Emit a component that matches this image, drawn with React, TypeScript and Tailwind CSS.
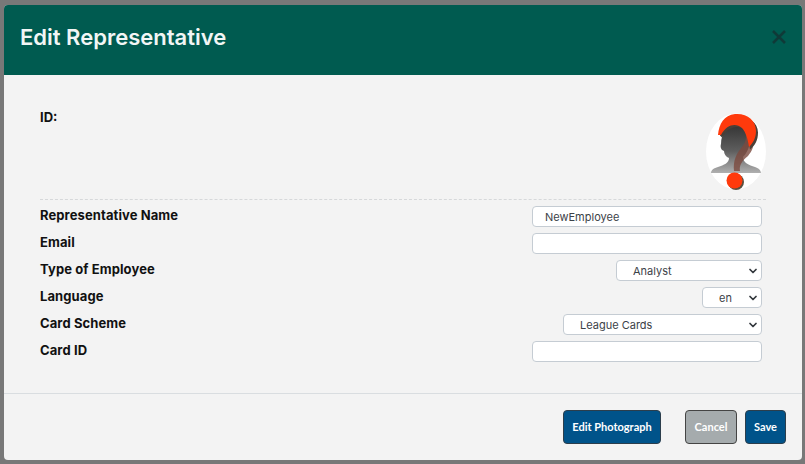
import { ChevronDown } from "lucide-react";

const inputClass =
  "h-[21px] w-[230px] rounded-[4px] border border-[#c5ccd3] bg-white pl-[12px] text-[11px] text-[#3c4248] outline-none";

function Avatar() {
  return (
    <svg width="62" height="78" viewBox="0 0 62 78" className="block">
      <defs>
        <linearGradient id="bust" x1="0" y1="0" x2="0" y2="1">
          <stop offset="0" stopColor="#333" />
          <stop offset="0.55" stopColor="#5e5e5e" />
          <stop offset="1" stopColor="#b0b0b0" />
        </linearGradient>
      </defs>
      <ellipse cx="31" cy="38.5" rx="30" ry="38" fill="#fff" />
      <path
        d="M16 31C16 20 23 11 32 11C42 11 46 20 45 29C44 36 41 41 38 44C38 50 44 52 50 54C53 55 56 57 56 60H6C6 57 9 55 13 54C19 52 24 50 24 45C21 44 19 41 19 38C16 37 15 34 16 31Z"
        fill="url(#bust)"
      />
      <path
        d="M29 58C28 48 31 41 37 34C41 29 42 24 40 18L47 26C50 33 47 38 43 43C37 48 34 52 35 58Z"
        fill="#7c4a3e"
        opacity="0.8"
      />
      <path
        d="M14 21C14 12 20 3 30 2C41 1 52 7 52 18C52 26 49 31 44 35C43 28 42 20 38 15C32 10 22 12 16 23Z"
        fill="#4a4038"
        transform="translate(1 1.5)"
      />
      <path
        d="M13 22C14 11 19 2 30 1C42 0 51 7 51 18C51 25 48 30 44 34C43 27 41 19 37 15C31 10 22 11 16 22Z"
        fill="#ff3a0c"
      />
      <circle cx="31" cy="69" r="8" fill="#5a5040" />
      <circle cx="29.5" cy="67.5" r="8" fill="#ff3a0c" />
    </svg>
  );
}

function Field({ label, children }: { label: string; children: React.ReactNode }) {
  return (
    <div className="flex h-[21px] items-start justify-between">
      <label className="text-[13px] leading-[18px] font-bold tracking-[0.1px] text-[#111]">{label}</label>
      {children}
    </div>
  );
}

function Select({ width, value }: { width: string; value: string }) {
  return (
    <div className={`relative ${width}`}>
      <select
        defaultValue={value}
        className="block h-[21px] w-full appearance-none rounded-[4px] border border-[#c5ccd3] bg-white pt-[2px] pl-[16px] text-[11px] text-[#3c4248] outline-none"
      >
        <option>{value}</option>
      </select>
      <ChevronDown
        size={12}
        strokeWidth={3.5}
        className="pointer-events-none absolute top-[5px] right-[3px] text-[#33383d]"
      />
    </div>
  );
}

export default function App() {
  return (
    <div className="h-[464px] w-[805px] overflow-hidden bg-[#787878] pt-[5px] pl-[4px] font-['Inter',sans-serif]">
      <div className="flex h-[455px] w-[798px] flex-col overflow-hidden rounded-[4px] bg-[#f3f3f3]">
        <div className="flex h-[70px] shrink-0 items-center justify-between bg-[#005b50] pr-[15px] pb-[6px] pl-[16px]">
          <h1 className="text-[22px] leading-[30px] font-semibold text-[#f2f6f5]">Edit Representative</h1>
          <svg width="16" height="16" viewBox="0 0 16 16">
            <path d="M2 2L14 14M14 2L2 14" stroke="#0f3a38" strokeWidth="2.6" />
          </svg>
        </div>

        <div className="flex-1 px-[36px]">
          <div className="flex h-[125px] items-start justify-between border-b border-dashed border-[#d6d8da] pt-[33px]">
            <span className="text-[13px] leading-[18px] font-bold text-[#111]">ID:</span>
            <div className="mt-[5px] mr-[-1px]">
              <Avatar />
            </div>
          </div>
          <div className="mt-[6px] flex flex-col gap-[6px] pr-[4px]">
            <Field label="Representative Name">
              <input className={inputClass} defaultValue="NewEmployee" />
            </Field>
            <Field label="Email">
              <input className={inputClass} />
            </Field>
            <Field label="Type of Employee">
              <Select width="w-[146px]" value="Analyst" />
            </Field>
            <Field label="Language">
              <Select width="w-[60px]" value="en" />
            </Field>
            <Field label="Card Scheme">
              <Select width="w-[199px]" value="League Cards" />
            </Field>
            <Field label="Card ID">
              <input className={inputClass} />
            </Field>
          </div>
        </div>

        <div className="flex h-[67px] shrink-0 items-start justify-end border-t border-[#d9dde0] pt-[16px] pr-[16px] font-['Lato',sans-serif] text-[11px] font-bold text-white">
          <button className="h-[34px] w-[98px] rounded-[4px] border border-[#2c3e4c] bg-[#00538a]">Edit Photograph</button>
          <button className="ml-[24px] h-[34px] w-[52px] rounded-[4px] border border-[#444] bg-[#a5abad]">Cancel</button>
          <button className="ml-[8px] h-[34px] w-[41px] rounded-[4px] border border-[#2c3e4c] bg-[#00538a]">Save</button>
        </div>
      </div>
    </div>
  );
}
